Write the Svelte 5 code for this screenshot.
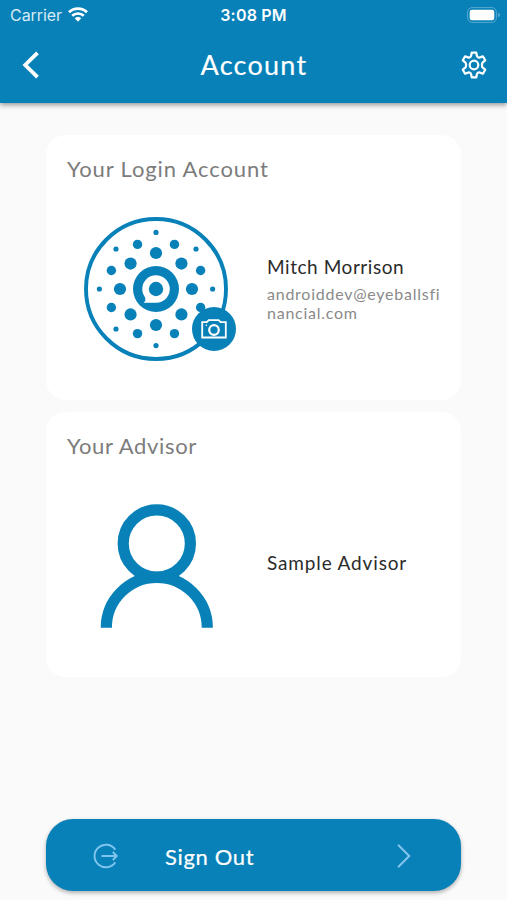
<script lang="ts">
	let user = {
		name: 'Mitch Morrison',
		email: 'androiddev@eyeballsfinancial.com'
	};
	let advisor = { name: 'Sample Advisor' };

	const rings = [
		{ distance: 36, size: 6.1, start: 0 },
		{ distance: 48.3, size: 4.7, start: 22.5 },
		{ distance: 56.6, size: 2.6, start: 0 }
	];

	const dots = rings.flatMap((ring) =>
		Array.from({ length: 8 }, (_, i) => {
			const angle = ((ring.start + i * 45) * Math.PI) / 180;
			return {
				x: 72 + ring.distance * Math.cos(angle),
				y: 72 + ring.distance * Math.sin(angle),
				r: ring.size
			};
		})
	);
</script>

<div class="screen">
	<header>
		<div class="status-bar">
			<div class="carrier">
				<span class="carrier-name">Carrier</span>
				<svg width="20" height="15" viewBox="0 0 20 15">
					<g fill="none" stroke="#fff" stroke-width="2.7">
						<path d="M1 5.2a13 13 0 0 1 18 0" />
						<path d="M4.2 8.8a8.4 8.4 0 0 1 11.6 0" />
					</g>
					<path d="M6.7 11.3a4.8 4.8 0 0 1 6.6 0L10 14.7z" fill="#fff" />
				</svg>
			</div>
			<span class="time">3:08 PM</span>
			<svg class="battery" width="33" height="16" viewBox="0 0 33 16">
				<rect x=".6" y=".6" width="28.8" height="14.8" rx="4.5" fill="none" stroke="#5aa9d0" />
				<rect x="2.7" y="2.8" width="24.6" height="10.4" rx="2.3" fill="#fff" />
				<path d="M31 5.8q2 .6 2 2.2t-2 2.2z" fill="#5aa9d0" />
			</svg>
		</div>
		<nav>
			<button class="icon-button" aria-label="Back">
				<svg width="18" height="28" viewBox="0 0 18 28">
					<path d="M15.5 1.8 3.2 14l12.3 12.2" fill="none" stroke="#fff" stroke-width="3.8" />
				</svg>
			</button>
			<h1>Account</h1>
			<button class="icon-button" aria-label="Settings">
				<svg width="28" height="28" viewBox="0 0 28 28" fill="none" stroke="#fff" stroke-width="2.2">
					<path
						d="M11.7 1.7h4.6l.6 3.1q.2 1 1.1 1.5t1.9.1l3-1.1 2.3 4-2.4 2q-.8.7-.8 1.7v2q0 1 .8 1.7l2.4 2-2.3 4-3-1.1q-1-.4-1.9.1t-1.1 1.5l-.6 3.1h-4.6l-.6-3.1q-.2-1-1.1-1.5t-1.9-.1l-3 1.1-2.3-4 2.4-2q.8-.7.8-1.7v-2q0-1-.8-1.7l-2.4-2 2.3-4 3 1.1q1 .4 1.9-.1t1.1-1.5z"
						stroke-linejoin="round"
					/>
					<circle cx="14" cy="14" r="4.3" />
				</svg>
			</button>
		</nav>
	</header>

	<main>
		<section class="card">
			<h2>Your Login Account</h2>
			<div class="card-body">
				<div class="avatar">
					<svg width="144" height="144" viewBox="0 0 144 144" fill="#0881b8">
						<circle cx="72" cy="72" r="70" fill="none" stroke="#0881b8" stroke-width="3.9" />
						{#each dots as dot}
							<circle cx={dot.x} cy={dot.y} r={dot.r} />
						{/each}
						<circle cx="72" cy="72" r="23" />
						<path d="M72 85.8H59.6q3-2.2 1.2-5.8A13.8 13.8 0 1 1 72 85.8z" fill="#fff" />
						<circle cx="72" cy="72" r="7.2" />
					</svg>
					<button class="camera" aria-label="Change photo">
						<svg width="26" height="20" viewBox="0 0 26 20" fill="none" stroke="#fff">
							<path d="M1.2 3.2h4.6l2-2.1h9.8l2 2.1h5.2v15.3H1.2z" stroke-width="1.8" />
							<circle cx="13" cy="11" r="4.8" stroke-width="2.2" />
							<circle cx="5.3" cy="6.3" r=".8" fill="#fff" stroke="none" />
						</svg>
					</button>
				</div>
				<div class="details">
					<p class="name">{user.name}</p>
					<p class="email">{user.email}</p>
				</div>
			</div>
		</section>

		<section class="card">
			<h2 class="advisor-title">Your Advisor</h2>
			<div class="card-body">
				<div class="avatar">
					<svg width="144" height="144" viewBox="0 0 144 144">
						<g fill="none" stroke="#0881b8" stroke-width="11.2">
							<circle cx="72.8" cy="49.5" r="33.6" />
							<path d="M22.3 133.8a50.5 50.5 0 0 1 101 0" />
						</g>
					</svg>
				</div>
				<div class="details advisor-details">
					<p class="name">{advisor.name}</p>
				</div>
			</div>
		</section>

		<button class="sign-out">
			<svg width="26" height="26" viewBox="0 0 26 26" fill="none" stroke="#80c5ed" stroke-width="1.9">
				<path d="M22.3 6.8a11.3 11.3 0 1 0 0 12.4" />
				<path d="M8.5 13h15M19.8 9l4 4-4 4" />
			</svg>
			<span>Sign Out</span>
			<svg width="16" height="26" viewBox="0 0 16 26">
				<path d="m2 1.8 11.2 11.2L2 24.2" fill="none" stroke="#80c5ed" stroke-width="2" />
			</svg>
		</button>
	</main>
</div>

<style>
	:global(body) {
		margin: 0;
		background: #fafafa;
	}
	.screen {
		display: flex;
		flex-direction: column;
		height: 900px;
		overflow: hidden;
		background: #fafafa;
		font-family: Lato, sans-serif;
	}
	.screen svg {
		display: block;
	}
	h1,
	h2,
	p {
		margin: 0;
		font-weight: 400;
	}
	button {
		padding: 0;
		border: none;
		background: none;
		color: inherit;
		font-family: inherit;
		cursor: pointer;
	}
	header {
		box-sizing: border-box;
		height: 103px;
		background: #0881b8;
		color: #fff;
		box-shadow: 0 2px 5px rgba(0, 0, 0, 0.4);
	}
	.status-bar {
		display: grid;
		grid-template-columns: 1fr auto 1fr;
		align-items: center;
		height: 29px;
		padding: 0 7px 0 10px;
		font-family: Inter, sans-serif;
		font-size: 16px;
	}
	.carrier {
		display: flex;
		align-items: center;
		gap: 6px;
	}
	.carrier-name {
		color: #d6ebf5;
		width: 52px;
		letter-spacing: -0.05px;
	}
	.time {
		font-size: 16px;
		font-weight: 600;
		letter-spacing: 0.2px;
		margin-right: 3px;
	}
	.battery {
		justify-self: end;
	}
	nav {
		display: grid;
		grid-template-columns: 1fr auto 1fr;
		align-items: center;
		height: 72px;
		padding: 0 19px 0 22px;
	}
	.icon-button:last-child {
		justify-self: end;
	}
	h1 {
		margin-right: 2px;
		font-size: 27px;
		line-height: 34px;
		letter-spacing: 1.25px;
		-webkit-text-stroke: 0.15px #fff;
	}
	main {
		display: flex;
		flex: 1;
		flex-direction: column;
		gap: 12px;
		padding: 32px 46px 9px;
	}
	.card {
		box-sizing: border-box;
		height: 265px;
		padding: 20px 20px 0 21px;
		border-radius: 20px;
		background: #fff;
	}
	h2 {
		color: #7c7c7c;
		font-size: 22px;
		line-height: 28px;
		letter-spacing: 0.87px;
	}
	.advisor-title {
		letter-spacing: 0.65px;
	}
	.card-body {
		display: flex;
		align-items: center;
		gap: 38px;
		margin: 34px 0 0 17px;
	}
	.avatar {
		position: relative;
		flex: none;
	}
	.camera {
		position: absolute;
		right: -8px;
		bottom: 10px;
		display: flex;
		align-items: center;
		justify-content: center;
		width: 44px;
		height: 44px;
		border-radius: 50%;
		background: #0881b8;
	}
	.details {
		flex: 1;
		min-width: 0;
		padding: 0 0 2px 1px;
	}
	.advisor-details {
		padding-bottom: 6px;
	}
	.name {
		color: #2b2b2b;
		font-size: 19px;
		line-height: 26px;
		letter-spacing: 0.55px;
	}
	.advisor-details .name {
		letter-spacing: 0.85px;
	}
	.email {
		margin-top: 4px;
		color: #8a8a8a;
		font-size: 16px;
		line-height: 19px;
		letter-spacing: 0.75px;
		word-break: break-all;
	}
	.sign-out {
		display: grid;
		grid-template-columns: 26px 1fr auto;
		align-items: center;
		column-gap: 46px;
		height: 72px;
		margin-top: auto;
		padding: 2px 49px 0 47px;
		border-radius: 27px;
		background: #0881b8;
		box-shadow: 0 2px 4px rgba(0, 0, 0, 0.3);
		color: #fff;
		font-size: 22px;
		letter-spacing: 0.65px;
		text-align: left;
		-webkit-text-stroke: 0.2px #fff;
	}
</style>
